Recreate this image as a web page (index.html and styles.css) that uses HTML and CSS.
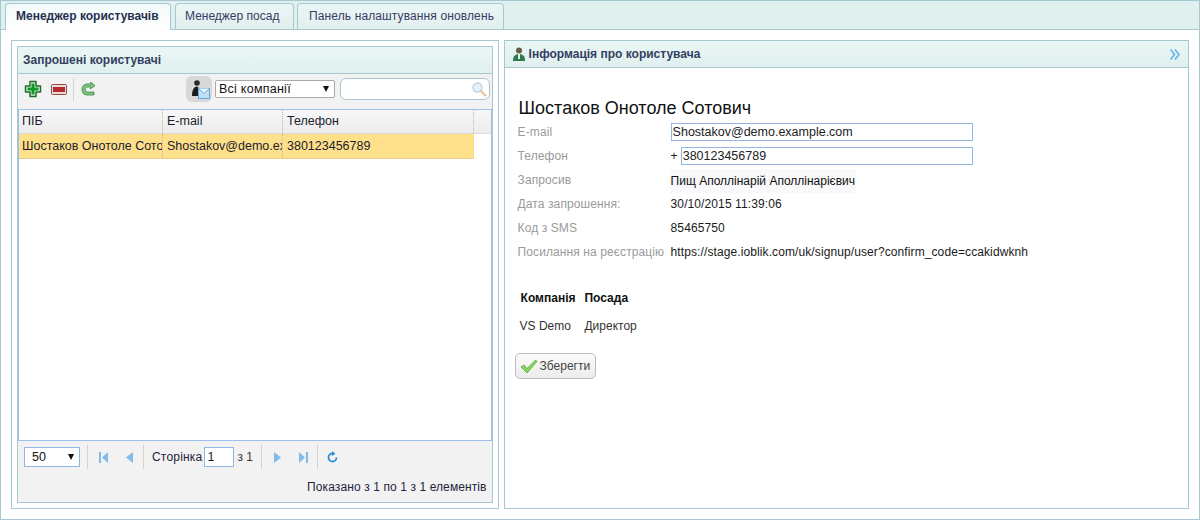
FILE: index.html
```html
<!DOCTYPE html>
<html lang="uk">
<head>
<meta charset="utf-8">
<title>Менеджер користувачів</title>
<link rel="stylesheet" href="styles.css">
</head>
<body>
<div class="app">
	<div class="tabs">
		<div class="tab active">Менеджер користувачів</div>
		<div class="tab tab-2">Менеджер посад</div>
		<div class="tab tab-3">Панель налаштування оновлень</div>
	</div>
	<div class="content">
		<div class="panel left-panel">
			<div class="inner-panel">
				<div class="panel-title">Запрошені користувачі</div>
				<div class="toolbar">
					<svg class="tool" width="18" height="18" viewBox="0 0 18 18"><path d="M6 1.500h6v4.500h4.500v6H12v4.500H6V12H1.500V6H6z" fill="#d8efd8" stroke="#1f6b2c" stroke-width="1.500" stroke-linejoin="round"/><path d="M7.500 3.500h3v4h4v3h-4v4h-3v-4h-4v-3h4z" fill="#0c9a2a"/></svg>
					<svg class="tool tool-minus" width="16" height="11" viewBox="0 0 16 11"><rect x=".5" y=".5" width="15" height="10" rx="1" fill="#eadada" stroke="#8f4a4a"/><rect x="2" y="3" width="12" height="5" fill="#b52a2e"/></svg>
					<span class="sep"></span>
					<svg class="tool tool-refresh" width="15" height="15" viewBox="0 0 15 15"><path d="M14 3.500L9.500 0v2H6C2.500 2 1 4.500 1 7.500S2.500 13 6 13h7v-3H6.500C5 10 4.300 9 4.300 7.500S5 5 6.500 5h3v2z" fill="#7fc07f" stroke="#3f8a4c" stroke-width=".8" stroke-linejoin="round"/></svg>
					<span class="invite-btn">
						<svg width="24" height="24" viewBox="0 0 24 24"><circle cx="10" cy="6" r="2.800" fill="#2a2a2a"/><path d="M5 19c0-6 1.500-9 5-9.500l1.500 1V19z" fill="#1c1c1c"/><rect x="11.500" y="11.500" width="11" height="10" fill="#bfe0f5" stroke="#6aa6d6"/><path d="M11.500 11.500l5.500 5 5.500-5" fill="#e8f5fc" stroke="#6aa6d6"/></svg>
					</span>
					<div class="select company-select"><span>Всі компанії</span><i class="caret"></i></div>
					<div class="search">
						<svg width="16" height="16" viewBox="0 0 16 16"><circle cx="6.500" cy="6.500" r="4.500" fill="#e4f1fa" stroke="#c3d6e4" stroke-width="1.500"/><path d="M10 10l4.500 4.500" stroke="#dfc49c" stroke-width="2.200" stroke-linecap="round"/></svg>
					</div>
				</div>
				<div class="grid">
					<div class="grid-head">
						<div class="cell col-name">ПІБ</div>
						<div class="cell col-mail">E-mail</div>
						<div class="cell col-phone">Телефон</div>
						<div class="cell col-end"></div>
					</div>
					<div class="grid-row">
						<div class="cell col-name">Шостаков Онотоле Сотович</div>
						<div class="cell col-mail">Shostakov@demo.example.com</div>
						<div class="cell col-phone">380123456789</div>
					</div>
				</div>
				<div class="pager">
					<div class="pager-line">
						<div class="select size-select"><span>50</span><i class="caret"></i></div>
						<span class="sep"></span>
						<svg class="pg pg-first" width="9" height="11" viewBox="0 0 9 11"><path d="M0 0h2v11H0zM9 0v11L3 5.500z" fill="#7fbcec"/></svg>
						<svg class="pg pg-prev" width="7" height="11" viewBox="0 0 7 11"><path d="M7 0v11L0 5.500z" fill="#7fbcec"/></svg>
						<span class="sep sep-prev"></span>
						<span class="pg-label">Сторінка</span>
						<div class="page-input">1</div>
						<span class="pg-of">з 1</span>
						<span class="sep sep-of"></span>
						<svg class="pg pg-next" width="7" height="11" viewBox="0 0 7 11"><path d="M0 0v11l7-5.500z" fill="#7fbcec"/></svg>
						<svg class="pg pg-last" width="9" height="11" viewBox="0 0 9 11"><path d="M0 0v11l6-5.500zM7 0h2v11H7z" fill="#7fbcec"/></svg>
						<span class="sep sep-last"></span>
						<svg class="pg pg-reload" width="11" height="12" viewBox="0 0 11 12"><path d="M5.500 2.500a4 4 0 1 0 4 4" fill="none" stroke="#2f8fd8" stroke-width="1.800"/><path d="M5 0l3.500 2.700L5 5z" fill="#2f8fd8"/></svg>
					</div>
					<div class="pager-info">Показано з 1 по 1 з 1 елементів</div>
				</div>
			</div>
		</div>
		<div class="panel right-panel">
			<div class="panel-title info-title">
				<svg width="12" height="15" viewBox="0 0 12 15"><circle cx="6" cy="3.500" r="3" fill="#6b5a45"/><path d="M0 14c0-5 2-7 6-7s6 2 6 7z" fill="#2f7a4e"/><path d="M5 7h2v5H5z" fill="#e8efe8"/></svg>
				<span>Інформація про користувача</span>
				<svg class="collapse" width="10" height="11" viewBox="0 0 10 11"><path d="M.5 .5l4 5-4 5M5 .5l4 5-4 5" fill="none" stroke="#5fb0ee" stroke-width="1.500"/></svg>
			</div>
			<div class="info-body">
				<h1 class="user-name">Шостаков Онотоле Сотович</h1>
				<div class="field field-first">
					<label>E-mail</label>
					<div class="text-input">Shostakov@demo.example.com</div>
				</div>
				<div class="field">
					<label>Телефон</label>
					<span class="plus">+</span>
					<div class="text-input phone-input">380123456789</div>
				</div>
				<div class="field">
					<label>Запросив</label>
					<span class="inviter">Пищ Аполлінарій Аполлінарієвич</span>
				</div>
				<div class="field">
					<label>Дата запрошення:</label>
					<span>30/10/2015 11:39:06</span>
				</div>
				<div class="field">
					<label>Код з SMS</label>
					<span>85465750</span>
				</div>
				<div class="field">
					<label>Посилання на реєстрацію</label>
					<span>https://stage.ioblik.com/uk/signup/user?confirm_code=ccakidwknh</span>
				</div>
				<table class="jobs">
					<tr><th>Компанія</th><th>Посада</th></tr>
					<tr><td>VS Demo</td><td>Директор</td></tr>
				</table>
				<button class="save-btn" type="button">
					<svg width="18" height="15" viewBox="0 0 18 15"><path d="M1 8l3-2 3 3.500L15.500 1 17 2.500 7 14z" fill="#8ad65a" stroke="#5aa84a" stroke-width=".8" stroke-linejoin="round"/></svg>
					<span>Зберегти</span>
				</button>
			</div>
		</div>
	</div>
</div>
</body>
</html>
```

FILE: styles.css
```css
html, body {margin: 0; padding: 0; background: #fff;}
body {font-family: "Liberation Sans", Arial, sans-serif; font-size: 12px; color: #1c1c2e;}

.app {
	width: 1200px; height: 520px; box-sizing: border-box;
	border: solid 1px #a7c8ce;
	display: flex; flex-direction: column;
}

.tabs {
	height: 29px; box-sizing: border-box; flex: none;
	padding: 2px 0 0 4px;
	display: flex;
	background: #e0f0ef;
	border-bottom: solid 1px #a7c8ce;
}
.tab {
	height: 26px; line-height: 24px; box-sizing: border-box;
	padding: 0 10px;
	margin-right: 3px;
	border: solid 1px #a7c8ce; border-bottom: 0;
	border-radius: 4px 4px 0 0;
	background: linear-gradient(#eaf6f5, #e0f0ef);
	color: #3a3a63;
}
.tab.active {
	width: 166px; height: 27px; padding: 0 0 0 10px; margin-right: 4px;
	background: linear-gradient(#f2f9f9, #fff);
	font-weight: bold; color: #26304f;
}
.tab-2 {width: 119px; padding: 0 0 0 9px;}
.tab-3 {width: 207px; padding: 0 0 0 11px; letter-spacing: .01em;}

.content {
	flex: 1; display: flex; gap: 5px;
	padding: 10px;
	min-height: 0;
}

.panel {border: solid 1px #a7c8ce; box-sizing: border-box;}
.left-panel {width: 488px; padding: 5px; display: flex;}
.right-panel {width: 686px; display: flex; flex-direction: column;}

.inner-panel {
	flex: 1; display: flex; flex-direction: column; min-width: 0;
	border: solid 1px #a7c8ce;
	background: #f2f2f2;
}
.panel-title {
	height: 27px; line-height: 26px; box-sizing: border-box; flex: none;
	padding-left: 5px;
	background: linear-gradient(#eaf6f6, #e0f0ef);
	border-bottom: solid 1px #a7c8ce;
	font-weight: bold; color: #33405f;
}

.toolbar {
	height: 35px; flex: none; box-sizing: border-box;
	display: flex; align-items: center;
	padding: 0 0 5px 6px;
}
.tool-minus {margin-left: 9px;}
.tool-refresh {margin-left: 7px;}
.toolbar .sep {margin-left: 6px; height: 23px;}
.sep {width: 1px; height: 24px; background: #d3d3d3; flex: none;}
.invite-btn {
	width: 26px; height: 26px; margin-left: 90px;
	display: flex; align-items: center; justify-content: center;
	background: #d8d8d8; border-radius: 6px;
}
.select {
	box-sizing: border-box; height: 19px; line-height: 17px;
	display: flex; justify-content: space-between; align-items: center;
	background: #fff;
	font-size: 12.500px; color: #111;
}
.company-select {
	width: 120px; height: 18px; line-height: 16px; margin-left: 3px; padding: 0 5px 0 3px;
	border: solid 1px #a9a9a9; border-radius: 2px;
	letter-spacing: .02em;
}
.caret {
	width: 0; height: 0;
	border-left: 3.500px solid transparent; border-right: 3.500px solid transparent;
	border-top: 6px solid #111;
}
.search {
	width: 150px; height: 22px; box-sizing: border-box; margin-left: 5px; padding-right: 2px;
	border: solid 1px #a7c8ce; border-radius: 6px;
	background: #fff;
	display: flex; justify-content: flex-end; align-items: center;
}

.grid {
	flex: 1; min-height: 0;
	border: solid 1px #9dc0ea;
	background: #fff;
}
.grid-head, .grid-row {display: flex;}
.grid-head {
	height: 24px; box-sizing: border-box; line-height: 22px;
	background: linear-gradient(#f8f8f8, #ececec);
	border-bottom: solid 1px #dcdcdc;
	font-size: 12.500px;
}
.grid-row {
	height: 25px; line-height: 24px; width: 455px;
	background: #ffe08a;
	border-bottom: dotted 1px #c9bd8a;
	box-sizing: border-box;
	font-size: 12.500px;
}
.cell {
	box-sizing: border-box; padding-left: 3px;
	white-space: nowrap; overflow: hidden;
	border-right: dotted 1px #b8b8b8;
}
.col-name {width: 144px;}
.col-mail {width: 120px; padding-left: 4px;}
.col-phone {width: 191px; padding-left: 4px;}
.col-end {flex: 1; border-right: 0;}
.grid-row .col-phone {border-right: 0;}

.pager {height: 61px; flex: none; box-sizing: border-box; padding: 4px 5px 0 6px;}
.pager-line {display: flex; align-items: center; height: 24px;}
.size-select {
	width: 56px; height: 20px; padding: 0 5px 0 7px;
	border: solid 1px #8fb6e6;
}
.pager-line .sep {margin-left: 7px;}
.pg-first {margin-left: 11px;}
.pg-prev {margin-left: 18px;}
.pager-line .sep-prev {margin-left: 10px;}
.pg-label {margin-left: 8px; color: #22263a; letter-spacing: .2px;}
.page-input {
	width: 30px; height: 20px; line-height: 18px; box-sizing: border-box;
	margin-left: 2px; padding-left: 2px;
	border: solid 1px #8fb6e6;
	background: #fff; color: #222;
	font-size: 12.500px;
}
.pg-of {margin-left: 3px; color: #3a3a3a;}
.pager-line .sep-of {margin-left: 8px;}
.pg-next {margin-left: 12px;}
.pg-last {margin-left: 18px;}
.pager-line .sep-last {margin-left: 9px;}
.pg-reload {margin-left: 9px;}
.pager-info {text-align: right; margin-top: 11px; color: #22263a; letter-spacing: .1px;}

.info-title {display: flex; align-items: center; gap: 4px; padding-left: 8px;}
.collapse {margin-left: auto; margin-right: 8px;}

.info-body {flex: 1; padding: 31px 13px 0 13px; color: #1a1a1a;}
.user-name {
	margin: 0 0 0 1px; font-size: 18px; font-weight: normal; line-height: 18px; color: #111;
}
.field {display: flex; align-items: center; height: 24px; white-space: nowrap; letter-spacing: .1px;}
.field-first {margin-top: 3px;}
.field label {width: 153px; flex: none; color: #9a9a9a; margin-left: -1px; padding-left: 1px;}
.text-input {
	width: 302px; height: 18px; line-height: 16px; box-sizing: border-box;
	padding-left: 1px;
	border: solid 1px #8fb6e6;
	background: #fff; color: #222;
	font-size: 12.500px; letter-spacing: 0;
}
.phone-input {width: 292px; margin-left: 3px;}
.inviter {background: #f9f9fb; padding: 5px 1px; margin: 2px 0 0 -1px; color: #111; letter-spacing: 0;}

.jobs {border-collapse: collapse; margin: 20px 0 0 0;}
.jobs th, .jobs td {padding: 0; text-align: left; height: 28px; font-size: 12px;}
.jobs th {padding: 0 9px 0 3px; color: #111;}
.jobs th + th {padding-left: 0;}
.jobs td {padding-right: 9px; padding-left: 2px; color: #333;}
.jobs td + td {padding-left: 0;}

.save-btn {
	display: flex; align-items: center; gap: 2px;
	width: 81px; height: 26px; margin: 13px 0 0 -3px; padding: 0 0 0 4px;
	border: solid 1px #bdbdbd; border-radius: 5px;
	background: linear-gradient(#fbfbfb, #ececec);
	font-family: "Liberation Sans", Arial, sans-serif; font-size: 12px; color: #444;
}
```
